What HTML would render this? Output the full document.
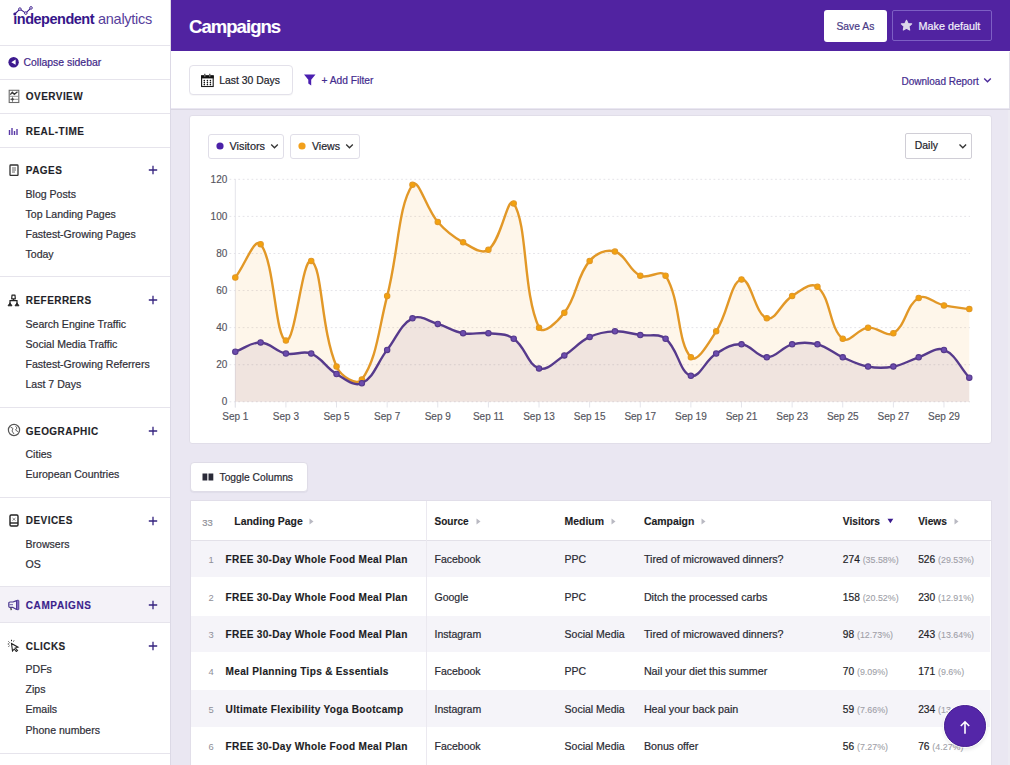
<!DOCTYPE html>
<html><head><meta charset="utf-8"><title>Campaigns</title>
<style>
html,body{margin:0;padding:0;width:1010px;height:765px;overflow:hidden;background:#e9e7f1;font-family:"Liberation Sans", sans-serif;}
.r{position:absolute;}
.t{position:absolute;white-space:nowrap;font-family:"Liberation Sans", sans-serif;}
</style></head><body>
<div class="r" style="left:0px;top:0px;width:1010px;height:765px;background:#eae7f2"></div>
<div class="r" style="left:0px;top:0px;width:170px;height:765px;background:#ffffff"></div>
<div class="r" style="left:170px;top:0px;width:1px;height:765px;background:#dcd9e6"></div>
<div class="r" style="left:171px;top:0px;width:839px;height:51.5px;background:#5123a1"></div>
<div class="r" style="left:171px;top:51px;width:839px;height:57px;background:#ffffff"></div>
<div class="r" style="left:171px;top:108.5px;width:839px;height:1.5px;background:#d9d6e2"></div>
<div class="r" style="left:1009px;top:51.5px;width:1px;height:57px;background:#e2e0e8"></div>
<div class="r" style="left:1008px;top:110px;width:2px;height:655px;background:#edebf3"></div>
<div class="t" style="left:13.3px;top:10.7px;font-size:14.5px;line-height:16px;color:#36168a;font-weight:700;letter-spacing:-0.5px">&#305;ndependent</div>
<div class="t" style="left:98px;top:10.7px;font-size:14.5px;line-height:16px;color:#57409c;letter-spacing:-0.27px">analytics</div>
<svg class="r" style="left:12px;top:6px;" width="22" height="10" viewBox="0 0 22 10"><polyline points="2.8,8 7.9,3.1 13.8,7.1 19,1.9" fill="none" stroke="#36168a" stroke-width="1.1"/><circle cx="2.8" cy="8" r="1.5" fill="#36168a"/><circle cx="7.9" cy="3.1" r="1.3" fill="#fff" stroke="#36168a" stroke-width="0.9"/><circle cx="13.8" cy="7.1" r="1.3" fill="#fff" stroke="#36168a" stroke-width="0.9"/><circle cx="19" cy="1.9" r="1.3" fill="#fff" stroke="#36168a" stroke-width="0.9"/></svg>
<div class="r" style="left:0px;top:45px;width:170px;height:1px;background:#e6e4ec"></div>
<div class="r" style="left:0px;top:79px;width:170px;height:1px;background:#e6e4ec"></div>
<div class="r" style="left:0px;top:113px;width:170px;height:1px;background:#e6e4ec"></div>
<div class="r" style="left:0px;top:147px;width:170px;height:1px;background:#e6e4ec"></div>
<div class="r" style="left:0px;top:276px;width:170px;height:1px;background:#e6e4ec"></div>
<div class="r" style="left:0px;top:407px;width:170px;height:1px;background:#e6e4ec"></div>
<div class="r" style="left:0px;top:497px;width:170px;height:1px;background:#e6e4ec"></div>
<div class="r" style="left:0px;top:586px;width:170px;height:1px;background:#e6e4ec"></div>
<div class="r" style="left:0px;top:622px;width:170px;height:1px;background:#e6e4ec"></div>
<div class="r" style="left:0px;top:753px;width:170px;height:1px;background:#e6e4ec"></div>
<div class="r" style="left:0px;top:587px;width:170px;height:35px;background:#f4f2f8"></div>
<svg class="r" style="left:8px;top:57px;" width="12" height="12" viewBox="0 0 12 12"><circle cx="5.6" cy="5.2" r="5.2" fill="#3d1a8f"/><path d="M7.6,2.6 L3.3,5.2 L7.6,7.8 Z" fill="#fff"/></svg>
<div class="t" style="left:23.50px;top:58.15px;font-size:10.45px;line-height:10.45px;color:#3f2788;-webkit-text-stroke:0.2px #3f2788;">Collapse sidebar</div>
<div class="t" style="left:25.80px;top:92.33px;font-size:10px;line-height:10px;font-weight:700;color:#1f1f29;-webkit-text-stroke:0.12px #1f1f29;letter-spacing:0.45px;">OVERVIEW</div>
<div class="t" style="left:25.80px;top:126.53px;font-size:10px;line-height:10px;font-weight:700;color:#1f1f29;-webkit-text-stroke:0.12px #1f1f29;letter-spacing:0.45px;">REAL-TIME</div>
<div class="t" style="left:25.80px;top:166.34px;font-size:10px;line-height:10px;font-weight:700;color:#1f1f29;-webkit-text-stroke:0.12px #1f1f29;letter-spacing:0.45px;">PAGES</div>
<div class="t" style="left:25.80px;top:296.44px;font-size:10px;line-height:10px;font-weight:700;color:#1f1f29;-webkit-text-stroke:0.12px #1f1f29;letter-spacing:0.45px;">REFERRERS</div>
<div class="t" style="left:25.80px;top:426.84px;font-size:10px;line-height:10px;font-weight:700;color:#1f1f29;-webkit-text-stroke:0.12px #1f1f29;letter-spacing:0.45px;">GEOGRAPHIC</div>
<div class="t" style="left:25.80px;top:516.33px;font-size:10px;line-height:10px;font-weight:700;color:#1f1f29;-webkit-text-stroke:0.12px #1f1f29;letter-spacing:0.45px;">DEVICES</div>
<div class="t" style="left:25.80px;top:601.33px;font-size:10px;line-height:10px;font-weight:700;color:#3b1f8c;-webkit-text-stroke:0.12px #3b1f8c;letter-spacing:0.6px;">CAMPAIGNS</div>
<div class="t" style="left:25.80px;top:641.53px;font-size:10px;line-height:10px;font-weight:700;color:#1f1f29;-webkit-text-stroke:0.12px #1f1f29;letter-spacing:0.45px;">CLICKS</div>
<div class="t" style="left:25.50px;top:189.27px;font-size:10.55px;line-height:10.55px;color:#2f2f38;-webkit-text-stroke:0.2px #2f2f38;">Blog Posts</div>
<div class="t" style="left:25.50px;top:209.27px;font-size:10.55px;line-height:10.55px;color:#2f2f38;-webkit-text-stroke:0.2px #2f2f38;">Top Landing Pages</div>
<div class="t" style="left:25.50px;top:229.27px;font-size:10.55px;line-height:10.55px;color:#2f2f38;-webkit-text-stroke:0.2px #2f2f38;">Fastest-Growing Pages</div>
<div class="t" style="left:25.50px;top:249.27px;font-size:10.55px;line-height:10.55px;color:#2f2f38;-webkit-text-stroke:0.2px #2f2f38;">Today</div>
<div class="t" style="left:25.50px;top:318.97px;font-size:10.55px;line-height:10.55px;color:#2f2f38;-webkit-text-stroke:0.2px #2f2f38;">Search Engine Traffic</div>
<div class="t" style="left:25.50px;top:338.97px;font-size:10.55px;line-height:10.55px;color:#2f2f38;-webkit-text-stroke:0.2px #2f2f38;">Social Media Traffic</div>
<div class="t" style="left:25.50px;top:359.17px;font-size:10.55px;line-height:10.55px;color:#2f2f38;-webkit-text-stroke:0.2px #2f2f38;">Fastest-Growing Referrers</div>
<div class="t" style="left:25.50px;top:379.27px;font-size:10.55px;line-height:10.55px;color:#2f2f38;-webkit-text-stroke:0.2px #2f2f38;">Last 7 Days</div>
<div class="t" style="left:25.50px;top:448.87px;font-size:10.55px;line-height:10.55px;color:#2f2f38;-webkit-text-stroke:0.2px #2f2f38;">Cities</div>
<div class="t" style="left:25.50px;top:468.87px;font-size:10.55px;line-height:10.55px;color:#2f2f38;-webkit-text-stroke:0.2px #2f2f38;">European Countries</div>
<div class="t" style="left:25.50px;top:538.87px;font-size:10.55px;line-height:10.55px;color:#2f2f38;-webkit-text-stroke:0.2px #2f2f38;">Browsers</div>
<div class="t" style="left:25.50px;top:558.87px;font-size:10.55px;line-height:10.55px;color:#2f2f38;-webkit-text-stroke:0.2px #2f2f38;">OS</div>
<div class="t" style="left:25.50px;top:663.87px;font-size:10.55px;line-height:10.55px;color:#2f2f38;-webkit-text-stroke:0.2px #2f2f38;">PDFs</div>
<div class="t" style="left:25.50px;top:683.97px;font-size:10.55px;line-height:10.55px;color:#2f2f38;-webkit-text-stroke:0.2px #2f2f38;">Zips</div>
<div class="t" style="left:25.50px;top:704.27px;font-size:10.55px;line-height:10.55px;color:#2f2f38;-webkit-text-stroke:0.2px #2f2f38;">Emails</div>
<div class="t" style="left:25.50px;top:724.57px;font-size:10.55px;line-height:10.55px;color:#2f2f38;-webkit-text-stroke:0.2px #2f2f38;">Phone numbers</div>
<svg class="r" style="left:148px;top:165.4px;" width="10" height="10" viewBox="0 0 10 10"><path d="M5,0.8 V9.2 M0.8,5 H9.2" stroke="#35237f" stroke-width="1.3"/></svg>
<svg class="r" style="left:148px;top:295.4px;" width="10" height="10" viewBox="0 0 10 10"><path d="M5,0.8 V9.2 M0.8,5 H9.2" stroke="#35237f" stroke-width="1.3"/></svg>
<svg class="r" style="left:148px;top:425.7px;" width="10" height="10" viewBox="0 0 10 10"><path d="M5,0.8 V9.2 M0.8,5 H9.2" stroke="#35237f" stroke-width="1.3"/></svg>
<svg class="r" style="left:148px;top:515.6999999999999px;" width="10" height="10" viewBox="0 0 10 10"><path d="M5,0.8 V9.2 M0.8,5 H9.2" stroke="#35237f" stroke-width="1.3"/></svg>
<svg class="r" style="left:148px;top:600.4px;" width="10" height="10" viewBox="0 0 10 10"><path d="M5,0.8 V9.2 M0.8,5 H9.2" stroke="#35237f" stroke-width="1.3"/></svg>
<svg class="r" style="left:148px;top:640.6999999999999px;" width="10" height="10" viewBox="0 0 10 10"><path d="M5,0.8 V9.2 M0.8,5 H9.2" stroke="#35237f" stroke-width="1.3"/></svg>
<svg class="r" style="left:8px;top:89px;" width="12" height="15" viewBox="0 0 12 15"><rect x="1.2" y="1.3" width="9.6" height="12.2" fill="none" stroke="#6a6a6a" stroke-width="1.1"/><polyline points="2.3,5.6 4.3,3.3 6.3,5.3 9.5,2.8" fill="none" stroke="#333" stroke-width="1.3"/><path d="M1.5,7.3 H10.5 M1.5,10.3 H10.5 M4.5,7.5 V13" stroke="#888" stroke-width="0.9"/><circle cx="4.5" cy="10.3" r="1.2" fill="#444"/></svg>
<svg class="r" style="left:8px;top:127px;" width="12" height="9" viewBox="0 0 12 9"><path d="M1.5,3 V8 M4,1 V8 M6.5,4 V8 M9,2 V8" stroke="#5a3aa6" stroke-width="1.4"/></svg>
<svg class="r" style="left:9px;top:164px;" width="10" height="12" viewBox="0 0 10 12"><rect x="1" y="1" width="8" height="10.5" rx="0.8" fill="none" stroke="#333" stroke-width="1.3"/><path d="M3,4 H7 M3,6 H7 M3,8 H6" stroke="#555" stroke-width="0.9"/></svg>
<svg class="r" style="left:7px;top:294px;" width="13" height="13" viewBox="0 0 13 13"><path d="M5,1.2 H8 L8.3,4.8 H4.7 Z" fill="none" stroke="#222" stroke-width="1.2" stroke-linejoin="round"/><path d="M6.5,5 V6.5 M3,9 V6.7 H10 V9" fill="none" stroke="#222" stroke-width="1.2"/><path d="M1,11.8 L3,8.8 L5,11.8 Z M8,11.8 L10,8.8 L12,11.8 Z" fill="#222" stroke="#222" stroke-width="0.9" stroke-linejoin="round"/></svg>
<svg class="r" style="left:7px;top:423px;" width="14" height="14" viewBox="0 0 14 14"><circle cx="7" cy="7" r="5.6" fill="none" stroke="#555" stroke-width="1.2"/><path d="M3.5,4 L6,5.5 L5,8 L7,11 M8.5,3.2 L10,5 L8.5,7 L11.5,9" fill="none" stroke="#666" stroke-width="1"/></svg>
<svg class="r" style="left:9px;top:514px;" width="10" height="13" viewBox="0 0 10 13"><rect x="1" y="1" width="8" height="11" rx="1.2" fill="none" stroke="#222" stroke-width="1.4"/><path d="M1,9 H9" stroke="#222" stroke-width="1.4"/><path d="M3.5,4 L6.5,6.5 M6.5,4 L3.5,6.5" stroke="#666" stroke-width="0.8"/></svg>
<svg class="r" style="left:7px;top:599px;" width="13" height="13" viewBox="0 0 13 13"><path d="M1.8,4.2 Q1.8,3 3,3 H6 L9.6,1.6 V10.4 L6,8.4 H3 Q1.8,8.4 1.8,7.2 Z" fill="none" stroke="#4a3690" stroke-width="1.2" stroke-linejoin="round"/><rect x="9.6" y="1.3" width="2.2" height="9.4" rx="0.5" fill="#8a72c8" stroke="#4a3690" stroke-width="0.9"/><path d="M3.8,8.6 L4.3,11.2" stroke="#555" stroke-width="1.5"/><path d="M2.5,5.7 H6" stroke="#4a3690" stroke-width="0.8"/></svg>
<svg class="r" style="left:7px;top:639px;" width="13" height="13" viewBox="0 0 13 13"><path d="M4.5,4.5 L11,8.2 L8.3,9 L10.5,11.5 L9.3,12.5 L7.2,10 L5.5,12 Z" fill="#fff" stroke="#222" stroke-width="1.1"/><path d="M1.5,2.5 L2.5,3.5 M4.5,0.8 V2.2 M7,1.5 L6.5,2.5 M0.8,5 H2.2 M1.5,7.5 L2.5,6.8" stroke="#222" stroke-width="1"/></svg>
<div class="t" style="left:189.00px;top:17.54px;font-size:18.5px;line-height:18.5px;font-weight:700;color:#ffffff;-webkit-text-stroke:0.12px #ffffff;letter-spacing:-0.95px;">Campaigns</div>
<div class="r" style="left:824px;top:10px;width:63px;height:31.5px;background:#fff;border-radius:3px"></div>
<div class="t" style="left:836.50px;top:22.08px;font-size:10.3px;line-height:10.3px;color:#4a3a86;-webkit-text-stroke:0.2px #4a3a86;">Save As</div>
<div class="r" style="left:892px;top:10px;width:100px;height:31px;border:1px solid #7d5fc4;border-radius:2px;box-sizing:border-box"></div>
<svg class="r" style="left:900px;top:19.3px;" width="13" height="12" viewBox="0 0 13 12"><path d="M6.5,1.2 L8.1,4.5 L11.7,4.9 L9,7.4 L9.7,11 L6.5,9.2 L3.3,11 L4,7.4 L1.3,4.9 L4.9,4.5 Z" fill="#dcd6ea" stroke="#dcd6ea" stroke-width="1.1" stroke-linejoin="round"/></svg>
<div class="t" style="left:918.50px;top:20.76px;font-size:10.8px;line-height:10.8px;color:#f3effa;-webkit-text-stroke:0.2px #f3effa;">Make default</div>
<div class="r" style="left:189px;top:65px;width:104px;height:30px;background:#fff;border:1px solid #e3e1ea;border-radius:4px;box-sizing:border-box;box-shadow:0 1px 1px rgba(0,0,0,0.03)"></div>
<svg class="r" style="left:200px;top:73px;" width="15" height="15" viewBox="0 0 15 15"><rect x="1.6" y="2.9" width="11.6" height="10.6" fill="none" stroke="#1a1a1a" stroke-width="1.1"/><rect x="1.1" y="2.4" width="12.6" height="3" fill="#111"/><rect x="4" y="0.8" width="1.5" height="3" fill="#666"/><rect x="9" y="0.8" width="1.5" height="3" fill="#666"/><circle cx="4.3" cy="7.6" r="0.8" fill="#111"/><circle cx="4.3" cy="9.6" r="0.8" fill="#111"/><circle cx="4.3" cy="11.6" r="0.8" fill="#111"/><circle cx="7.4" cy="7.6" r="0.8" fill="#111"/><circle cx="7.4" cy="9.6" r="0.8" fill="#111"/><circle cx="7.4" cy="11.6" r="0.8" fill="#111"/><circle cx="10.4" cy="7.6" r="0.8" fill="#111"/><circle cx="10.4" cy="9.6" r="0.8" fill="#111"/><circle cx="10.4" cy="11.6" r="0.8" fill="#111"/></svg>
<div class="t" style="left:219.20px;top:76.30px;font-size:10.4px;line-height:10.4px;color:#22222a;-webkit-text-stroke:0.2px #22222a;">Last 30 Days</div>
<svg class="r" style="left:303px;top:73px;" width="14" height="14" viewBox="0 0 14 14"><path d="M1,1.5 H12.5 L8.2,6.8 V12.5 L5.3,10.6 V6.8 Z" fill="#4a1fb0"/></svg>
<div class="t" style="left:321.50px;top:76.47px;font-size:10.2px;line-height:10.2px;color:#432b8e;-webkit-text-stroke:0.2px #432b8e;">+ Add Filter</div>
<div class="t" style="left:901.50px;top:76.63px;font-size:10px;line-height:10px;color:#432b8e;-webkit-text-stroke:0.2px #432b8e;">Download Report</div>
<svg class="r" style="left:983px;top:77px;" width="9" height="7" viewBox="0 0 9 7"><path d="M1.2,1.5 L4.5,4.8 L7.8,1.5" fill="none" stroke="#4b2a9a" stroke-width="1.4"/></svg>
<div class="r" style="left:189px;top:114.5px;width:802.5px;height:329px;background:#fff;border:1px solid #e1dee9;border-radius:3px;box-sizing:border-box"></div>
<div class="r" style="left:208px;top:133.5px;width:76px;height:25px;background:#fff;border:1px solid #e0dee8;border-radius:3px;box-sizing:border-box"></div>
<svg class="r" style="left:216px;top:142px;" width="8" height="8" viewBox="0 0 8 8"><circle cx="4" cy="4" r="3.6" fill="#4b21a8"/></svg>
<div class="t" style="left:229.50px;top:141.17px;font-size:10.9px;line-height:10.9px;color:#25252e;-webkit-text-stroke:0.2px #25252e;">Visitors</div>
<svg class="r" style="left:270px;top:143px;" width="9" height="7" viewBox="0 0 9 7"><path d="M1.2,1.5 L4.5,4.8 L7.8,1.5" fill="none" stroke="#333" stroke-width="1.3"/></svg>
<div class="r" style="left:290px;top:133.5px;width:69.5px;height:25px;background:#fff;border:1px solid #e0dee8;border-radius:3px;box-sizing:border-box"></div>
<svg class="r" style="left:298px;top:142px;" width="8" height="8" viewBox="0 0 8 8"><circle cx="4" cy="4" r="3.6" fill="#f2a01c"/></svg>
<div class="t" style="left:312.00px;top:141.43px;font-size:10.6px;line-height:10.6px;color:#25252e;-webkit-text-stroke:0.2px #25252e;">Views</div>
<svg class="r" style="left:344.5px;top:143px;" width="9" height="7" viewBox="0 0 9 7"><path d="M1.2,1.5 L4.5,4.8 L7.8,1.5" fill="none" stroke="#333" stroke-width="1.3"/></svg>
<div class="r" style="left:905px;top:133px;width:67px;height:25.5px;background:#fff;border:1px solid #d0ced6;border-radius:2px;box-sizing:border-box"></div>
<div class="t" style="left:914.80px;top:141.20px;font-size:10.4px;line-height:10.4px;color:#22222a;-webkit-text-stroke:0.2px #22222a;">Daily</div>
<svg class="r" style="left:957.5px;top:143px;" width="10" height="7" viewBox="0 0 10 7"><path d="M1.5,1.5 L4.8,4.8 L8.1,1.5" fill="none" stroke="#333" stroke-width="1.3"/></svg>
<svg class="r" style="left:0;top:0" width="1010" height="765" viewBox="0 0 1010 765"><line x1="229.5" y1="401.80" x2="970" y2="401.80" stroke="#e4e3e8" stroke-width="1" stroke-dasharray="1.8,2.6"/>
<line x1="229.5" y1="364.72" x2="970" y2="364.72" stroke="#e4e3e8" stroke-width="1" stroke-dasharray="1.8,2.6"/>
<line x1="229.5" y1="327.63" x2="970" y2="327.63" stroke="#e4e3e8" stroke-width="1" stroke-dasharray="1.8,2.6"/>
<line x1="229.5" y1="290.55" x2="970" y2="290.55" stroke="#e4e3e8" stroke-width="1" stroke-dasharray="1.8,2.6"/>
<line x1="229.5" y1="253.47" x2="970" y2="253.47" stroke="#e4e3e8" stroke-width="1" stroke-dasharray="1.8,2.6"/>
<line x1="229.5" y1="216.38" x2="970" y2="216.38" stroke="#e4e3e8" stroke-width="1" stroke-dasharray="1.8,2.6"/>
<line x1="229.5" y1="179.30" x2="970" y2="179.30" stroke="#e4e3e8" stroke-width="1" stroke-dasharray="1.8,2.6"/>
<line x1="235.30" y1="179" x2="235.30" y2="407.5" stroke="#e4e4ea" stroke-width="1"/>
<line x1="235.30" y1="401.8" x2="235.30" y2="407.5" stroke="#e4e4ea" stroke-width="1"/>
<line x1="285.92" y1="401.8" x2="285.92" y2="407.5" stroke="#e4e4ea" stroke-width="1"/>
<line x1="336.54" y1="401.8" x2="336.54" y2="407.5" stroke="#e4e4ea" stroke-width="1"/>
<line x1="387.16" y1="401.8" x2="387.16" y2="407.5" stroke="#e4e4ea" stroke-width="1"/>
<line x1="437.78" y1="401.8" x2="437.78" y2="407.5" stroke="#e4e4ea" stroke-width="1"/>
<line x1="488.40" y1="401.8" x2="488.40" y2="407.5" stroke="#e4e4ea" stroke-width="1"/>
<line x1="539.02" y1="401.8" x2="539.02" y2="407.5" stroke="#e4e4ea" stroke-width="1"/>
<line x1="589.64" y1="401.8" x2="589.64" y2="407.5" stroke="#e4e4ea" stroke-width="1"/>
<line x1="640.26" y1="401.8" x2="640.26" y2="407.5" stroke="#e4e4ea" stroke-width="1"/>
<line x1="690.88" y1="401.8" x2="690.88" y2="407.5" stroke="#e4e4ea" stroke-width="1"/>
<line x1="741.50" y1="401.8" x2="741.50" y2="407.5" stroke="#e4e4ea" stroke-width="1"/>
<line x1="792.12" y1="401.8" x2="792.12" y2="407.5" stroke="#e4e4ea" stroke-width="1"/>
<line x1="842.74" y1="401.8" x2="842.74" y2="407.5" stroke="#e4e4ea" stroke-width="1"/>
<line x1="893.36" y1="401.8" x2="893.36" y2="407.5" stroke="#e4e4ea" stroke-width="1"/>
<line x1="943.98" y1="401.8" x2="943.98" y2="407.5" stroke="#e4e4ea" stroke-width="1"/>
<path d="M235.30,277.57 C245.42,264.22 254.62,236.73 260.61,244.20 C274.87,261.95 274.91,336.98 285.92,340.61 C295.16,343.66 302.42,256.37 311.23,260.88 C322.67,266.75 320.49,328.95 336.54,366.57 C340.74,376.42 356.87,386.48 361.85,379.55 C377.12,358.30 378.39,329.85 387.16,296.11 C398.64,251.97 397.94,206.15 412.47,184.86 C418.19,176.48 426.04,208.61 437.78,221.95 C446.28,231.60 451.91,236.20 463.09,242.34 C472.16,247.32 481.66,254.95 488.40,249.76 C501.90,239.37 507.76,194.24 513.71,203.40 C528.00,225.39 522.58,292.10 539.02,327.63 C542.82,335.86 557.51,321.79 564.33,312.80 C577.76,295.09 575.83,277.57 589.64,260.88 C596.08,253.10 606.13,249.03 614.95,251.61 C626.38,254.96 628.52,270.12 640.26,275.72 C648.76,279.77 660.94,268.26 665.57,275.72 C681.19,300.89 676.67,341.68 690.88,357.30 C696.91,363.93 708.38,343.35 716.19,331.34 C728.63,312.20 730.28,282.30 741.50,279.43 C750.52,277.11 755.08,314.49 766.81,318.36 C775.32,321.17 780.87,303.12 792.12,296.11 C801.12,290.51 810.99,281.41 817.43,286.84 C831.24,298.47 829.05,327.72 842.74,338.76 C849.29,344.04 857.60,328.78 868.05,327.63 C877.85,326.56 885.79,337.63 893.36,333.20 C906.04,325.77 906.08,304.89 918.67,297.97 C926.33,293.76 933.70,303.12 943.98,305.38 C953.95,307.57 959.17,307.61 969.29,309.09 L969.29,401.8 L235.3,401.8 Z" fill="rgba(243,156,18,0.09)"/>
<path d="M235.30,351.74 C245.42,348.03 250.61,342.10 260.61,342.47 C270.86,342.84 275.35,351.27 285.92,353.59 C295.60,355.72 302.37,350.02 311.23,353.59 C322.61,358.18 325.47,367.50 336.54,373.99 C345.72,379.37 353.92,387.03 361.85,383.26 C374.17,377.39 376.86,363.09 387.16,349.88 C397.10,337.13 400.13,324.69 412.47,318.36 C420.38,314.31 427.86,321.02 437.78,323.93 C448.10,326.95 452.65,331.28 463.09,333.20 C472.90,334.99 478.40,332.10 488.40,333.20 C498.64,334.32 505.63,333.13 513.71,338.76 C525.87,347.22 527.31,364.57 539.02,368.43 C547.56,371.24 554.70,361.44 564.33,355.45 C574.95,348.83 578.55,342.18 589.64,336.90 C598.80,332.54 604.76,331.71 614.95,331.34 C625.01,330.97 630.14,333.57 640.26,335.05 C650.38,336.53 658.22,332.84 665.57,338.76 C678.47,349.15 679.31,372.45 690.88,375.84 C699.56,378.39 704.94,360.60 716.19,353.59 C725.19,347.99 731.65,343.60 741.50,344.32 C751.90,345.08 756.69,357.30 766.81,357.30 C776.93,357.30 781.41,347.07 792.12,344.32 C801.65,341.88 807.90,341.88 817.43,344.32 C828.14,347.07 832.34,352.73 842.74,357.30 C852.59,361.63 857.61,364.66 868.05,366.57 C877.86,368.37 883.55,368.37 893.36,366.57 C903.80,364.66 908.44,360.67 918.67,357.30 C928.68,354.00 935.63,346.52 943.98,349.88 C955.88,354.68 959.17,366.57 969.29,377.70 L969.29,401.8 L235.3,401.8 Z" fill="rgba(100,60,120,0.09)"/>
<path d="M235.30,277.57 C245.42,264.22 254.62,236.73 260.61,244.20 C274.87,261.95 274.91,336.98 285.92,340.61 C295.16,343.66 302.42,256.37 311.23,260.88 C322.67,266.75 320.49,328.95 336.54,366.57 C340.74,376.42 356.87,386.48 361.85,379.55 C377.12,358.30 378.39,329.85 387.16,296.11 C398.64,251.97 397.94,206.15 412.47,184.86 C418.19,176.48 426.04,208.61 437.78,221.95 C446.28,231.60 451.91,236.20 463.09,242.34 C472.16,247.32 481.66,254.95 488.40,249.76 C501.90,239.37 507.76,194.24 513.71,203.40 C528.00,225.39 522.58,292.10 539.02,327.63 C542.82,335.86 557.51,321.79 564.33,312.80 C577.76,295.09 575.83,277.57 589.64,260.88 C596.08,253.10 606.13,249.03 614.95,251.61 C626.38,254.96 628.52,270.12 640.26,275.72 C648.76,279.77 660.94,268.26 665.57,275.72 C681.19,300.89 676.67,341.68 690.88,357.30 C696.91,363.93 708.38,343.35 716.19,331.34 C728.63,312.20 730.28,282.30 741.50,279.43 C750.52,277.11 755.08,314.49 766.81,318.36 C775.32,321.17 780.87,303.12 792.12,296.11 C801.12,290.51 810.99,281.41 817.43,286.84 C831.24,298.47 829.05,327.72 842.74,338.76 C849.29,344.04 857.60,328.78 868.05,327.63 C877.85,326.56 885.79,337.63 893.36,333.20 C906.04,325.77 906.08,304.89 918.67,297.97 C926.33,293.76 933.70,303.12 943.98,305.38 C953.95,307.57 959.17,307.61 969.29,309.09" fill="none" stroke="#e29827" stroke-width="2.4"/>
<circle cx="235.30" cy="277.57" r="2.7" fill="#f4a20c" stroke="#e29827" stroke-width="1.1"/>
<circle cx="260.61" cy="244.20" r="2.7" fill="#f4a20c" stroke="#e29827" stroke-width="1.1"/>
<circle cx="285.92" cy="340.61" r="2.7" fill="#f4a20c" stroke="#e29827" stroke-width="1.1"/>
<circle cx="311.23" cy="260.88" r="2.7" fill="#f4a20c" stroke="#e29827" stroke-width="1.1"/>
<circle cx="336.54" cy="366.57" r="2.7" fill="#f4a20c" stroke="#e29827" stroke-width="1.1"/>
<circle cx="361.85" cy="379.55" r="2.7" fill="#f4a20c" stroke="#e29827" stroke-width="1.1"/>
<circle cx="387.16" cy="296.11" r="2.7" fill="#f4a20c" stroke="#e29827" stroke-width="1.1"/>
<circle cx="412.47" cy="184.86" r="2.7" fill="#f4a20c" stroke="#e29827" stroke-width="1.1"/>
<circle cx="437.78" cy="221.95" r="2.7" fill="#f4a20c" stroke="#e29827" stroke-width="1.1"/>
<circle cx="463.09" cy="242.34" r="2.7" fill="#f4a20c" stroke="#e29827" stroke-width="1.1"/>
<circle cx="488.40" cy="249.76" r="2.7" fill="#f4a20c" stroke="#e29827" stroke-width="1.1"/>
<circle cx="513.71" cy="203.40" r="2.7" fill="#f4a20c" stroke="#e29827" stroke-width="1.1"/>
<circle cx="539.02" cy="327.63" r="2.7" fill="#f4a20c" stroke="#e29827" stroke-width="1.1"/>
<circle cx="564.33" cy="312.80" r="2.7" fill="#f4a20c" stroke="#e29827" stroke-width="1.1"/>
<circle cx="589.64" cy="260.88" r="2.7" fill="#f4a20c" stroke="#e29827" stroke-width="1.1"/>
<circle cx="614.95" cy="251.61" r="2.7" fill="#f4a20c" stroke="#e29827" stroke-width="1.1"/>
<circle cx="640.26" cy="275.72" r="2.7" fill="#f4a20c" stroke="#e29827" stroke-width="1.1"/>
<circle cx="665.57" cy="275.72" r="2.7" fill="#f4a20c" stroke="#e29827" stroke-width="1.1"/>
<circle cx="690.88" cy="357.30" r="2.7" fill="#f4a20c" stroke="#e29827" stroke-width="1.1"/>
<circle cx="716.19" cy="331.34" r="2.7" fill="#f4a20c" stroke="#e29827" stroke-width="1.1"/>
<circle cx="741.50" cy="279.43" r="2.7" fill="#f4a20c" stroke="#e29827" stroke-width="1.1"/>
<circle cx="766.81" cy="318.36" r="2.7" fill="#f4a20c" stroke="#e29827" stroke-width="1.1"/>
<circle cx="792.12" cy="296.11" r="2.7" fill="#f4a20c" stroke="#e29827" stroke-width="1.1"/>
<circle cx="817.43" cy="286.84" r="2.7" fill="#f4a20c" stroke="#e29827" stroke-width="1.1"/>
<circle cx="842.74" cy="338.76" r="2.7" fill="#f4a20c" stroke="#e29827" stroke-width="1.1"/>
<circle cx="868.05" cy="327.63" r="2.7" fill="#f4a20c" stroke="#e29827" stroke-width="1.1"/>
<circle cx="893.36" cy="333.20" r="2.7" fill="#f4a20c" stroke="#e29827" stroke-width="1.1"/>
<circle cx="918.67" cy="297.97" r="2.7" fill="#f4a20c" stroke="#e29827" stroke-width="1.1"/>
<circle cx="943.98" cy="305.38" r="2.7" fill="#f4a20c" stroke="#e29827" stroke-width="1.1"/>
<circle cx="969.29" cy="309.09" r="2.7" fill="#f4a20c" stroke="#e29827" stroke-width="1.1"/>
<path d="M235.30,351.74 C245.42,348.03 250.61,342.10 260.61,342.47 C270.86,342.84 275.35,351.27 285.92,353.59 C295.60,355.72 302.37,350.02 311.23,353.59 C322.61,358.18 325.47,367.50 336.54,373.99 C345.72,379.37 353.92,387.03 361.85,383.26 C374.17,377.39 376.86,363.09 387.16,349.88 C397.10,337.13 400.13,324.69 412.47,318.36 C420.38,314.31 427.86,321.02 437.78,323.93 C448.10,326.95 452.65,331.28 463.09,333.20 C472.90,334.99 478.40,332.10 488.40,333.20 C498.64,334.32 505.63,333.13 513.71,338.76 C525.87,347.22 527.31,364.57 539.02,368.43 C547.56,371.24 554.70,361.44 564.33,355.45 C574.95,348.83 578.55,342.18 589.64,336.90 C598.80,332.54 604.76,331.71 614.95,331.34 C625.01,330.97 630.14,333.57 640.26,335.05 C650.38,336.53 658.22,332.84 665.57,338.76 C678.47,349.15 679.31,372.45 690.88,375.84 C699.56,378.39 704.94,360.60 716.19,353.59 C725.19,347.99 731.65,343.60 741.50,344.32 C751.90,345.08 756.69,357.30 766.81,357.30 C776.93,357.30 781.41,347.07 792.12,344.32 C801.65,341.88 807.90,341.88 817.43,344.32 C828.14,347.07 832.34,352.73 842.74,357.30 C852.59,361.63 857.61,364.66 868.05,366.57 C877.86,368.37 883.55,368.37 893.36,366.57 C903.80,364.66 908.44,360.67 918.67,357.30 C928.68,354.00 935.63,346.52 943.98,349.88 C955.88,354.68 959.17,366.57 969.29,377.70" fill="none" stroke="#563a8c" stroke-width="2.4"/>
<circle cx="235.30" cy="351.74" r="2.7" fill="#6c4cae" stroke="#563a8c" stroke-width="1.1"/>
<circle cx="260.61" cy="342.47" r="2.7" fill="#6c4cae" stroke="#563a8c" stroke-width="1.1"/>
<circle cx="285.92" cy="353.59" r="2.7" fill="#6c4cae" stroke="#563a8c" stroke-width="1.1"/>
<circle cx="311.23" cy="353.59" r="2.7" fill="#6c4cae" stroke="#563a8c" stroke-width="1.1"/>
<circle cx="336.54" cy="373.99" r="2.7" fill="#6c4cae" stroke="#563a8c" stroke-width="1.1"/>
<circle cx="361.85" cy="383.26" r="2.7" fill="#6c4cae" stroke="#563a8c" stroke-width="1.1"/>
<circle cx="387.16" cy="349.88" r="2.7" fill="#6c4cae" stroke="#563a8c" stroke-width="1.1"/>
<circle cx="412.47" cy="318.36" r="2.7" fill="#6c4cae" stroke="#563a8c" stroke-width="1.1"/>
<circle cx="437.78" cy="323.93" r="2.7" fill="#6c4cae" stroke="#563a8c" stroke-width="1.1"/>
<circle cx="463.09" cy="333.20" r="2.7" fill="#6c4cae" stroke="#563a8c" stroke-width="1.1"/>
<circle cx="488.40" cy="333.20" r="2.7" fill="#6c4cae" stroke="#563a8c" stroke-width="1.1"/>
<circle cx="513.71" cy="338.76" r="2.7" fill="#6c4cae" stroke="#563a8c" stroke-width="1.1"/>
<circle cx="539.02" cy="368.43" r="2.7" fill="#6c4cae" stroke="#563a8c" stroke-width="1.1"/>
<circle cx="564.33" cy="355.45" r="2.7" fill="#6c4cae" stroke="#563a8c" stroke-width="1.1"/>
<circle cx="589.64" cy="336.90" r="2.7" fill="#6c4cae" stroke="#563a8c" stroke-width="1.1"/>
<circle cx="614.95" cy="331.34" r="2.7" fill="#6c4cae" stroke="#563a8c" stroke-width="1.1"/>
<circle cx="640.26" cy="335.05" r="2.7" fill="#6c4cae" stroke="#563a8c" stroke-width="1.1"/>
<circle cx="665.57" cy="338.76" r="2.7" fill="#6c4cae" stroke="#563a8c" stroke-width="1.1"/>
<circle cx="690.88" cy="375.84" r="2.7" fill="#6c4cae" stroke="#563a8c" stroke-width="1.1"/>
<circle cx="716.19" cy="353.59" r="2.7" fill="#6c4cae" stroke="#563a8c" stroke-width="1.1"/>
<circle cx="741.50" cy="344.32" r="2.7" fill="#6c4cae" stroke="#563a8c" stroke-width="1.1"/>
<circle cx="766.81" cy="357.30" r="2.7" fill="#6c4cae" stroke="#563a8c" stroke-width="1.1"/>
<circle cx="792.12" cy="344.32" r="2.7" fill="#6c4cae" stroke="#563a8c" stroke-width="1.1"/>
<circle cx="817.43" cy="344.32" r="2.7" fill="#6c4cae" stroke="#563a8c" stroke-width="1.1"/>
<circle cx="842.74" cy="357.30" r="2.7" fill="#6c4cae" stroke="#563a8c" stroke-width="1.1"/>
<circle cx="868.05" cy="366.57" r="2.7" fill="#6c4cae" stroke="#563a8c" stroke-width="1.1"/>
<circle cx="893.36" cy="366.57" r="2.7" fill="#6c4cae" stroke="#563a8c" stroke-width="1.1"/>
<circle cx="918.67" cy="357.30" r="2.7" fill="#6c4cae" stroke="#563a8c" stroke-width="1.1"/>
<circle cx="943.98" cy="349.88" r="2.7" fill="#6c4cae" stroke="#563a8c" stroke-width="1.1"/>
<circle cx="969.29" cy="377.70" r="2.7" fill="#6c4cae" stroke="#563a8c" stroke-width="1.1"/></svg>
<div class="t" style="left:180px;width:47.3px;text-align:right;top:397.20px;font-size:10px;line-height:10px;color:#55555e;-webkit-text-stroke:0.15px #55555e">0</div>
<div class="t" style="left:180px;width:47.3px;text-align:right;top:360.12px;font-size:10px;line-height:10px;color:#55555e;-webkit-text-stroke:0.15px #55555e">20</div>
<div class="t" style="left:180px;width:47.3px;text-align:right;top:323.03px;font-size:10px;line-height:10px;color:#55555e;-webkit-text-stroke:0.15px #55555e">40</div>
<div class="t" style="left:180px;width:47.3px;text-align:right;top:285.95px;font-size:10px;line-height:10px;color:#55555e;-webkit-text-stroke:0.15px #55555e">60</div>
<div class="t" style="left:180px;width:47.3px;text-align:right;top:248.87px;font-size:10px;line-height:10px;color:#55555e;-webkit-text-stroke:0.15px #55555e">80</div>
<div class="t" style="left:180px;width:47.3px;text-align:right;top:211.78px;font-size:10px;line-height:10px;color:#55555e;-webkit-text-stroke:0.15px #55555e">100</div>
<div class="t" style="left:180px;width:47.3px;text-align:right;top:174.70px;font-size:10px;line-height:10px;color:#55555e;-webkit-text-stroke:0.15px #55555e">120</div>
<div class="t" style="left:205.30px;width:60px;text-align:center;top:411.84px;font-size:10px;line-height:10px;color:#55555e;-webkit-text-stroke:0.15px #55555e">Sep 1</div>
<div class="t" style="left:255.92px;width:60px;text-align:center;top:411.84px;font-size:10px;line-height:10px;color:#55555e;-webkit-text-stroke:0.15px #55555e">Sep 3</div>
<div class="t" style="left:306.54px;width:60px;text-align:center;top:411.84px;font-size:10px;line-height:10px;color:#55555e;-webkit-text-stroke:0.15px #55555e">Sep 5</div>
<div class="t" style="left:357.16px;width:60px;text-align:center;top:411.84px;font-size:10px;line-height:10px;color:#55555e;-webkit-text-stroke:0.15px #55555e">Sep 7</div>
<div class="t" style="left:407.78px;width:60px;text-align:center;top:411.84px;font-size:10px;line-height:10px;color:#55555e;-webkit-text-stroke:0.15px #55555e">Sep 9</div>
<div class="t" style="left:458.40px;width:60px;text-align:center;top:411.84px;font-size:10px;line-height:10px;color:#55555e;-webkit-text-stroke:0.15px #55555e">Sep 11</div>
<div class="t" style="left:509.02px;width:60px;text-align:center;top:411.84px;font-size:10px;line-height:10px;color:#55555e;-webkit-text-stroke:0.15px #55555e">Sep 13</div>
<div class="t" style="left:559.64px;width:60px;text-align:center;top:411.84px;font-size:10px;line-height:10px;color:#55555e;-webkit-text-stroke:0.15px #55555e">Sep 15</div>
<div class="t" style="left:610.26px;width:60px;text-align:center;top:411.84px;font-size:10px;line-height:10px;color:#55555e;-webkit-text-stroke:0.15px #55555e">Sep 17</div>
<div class="t" style="left:660.88px;width:60px;text-align:center;top:411.84px;font-size:10px;line-height:10px;color:#55555e;-webkit-text-stroke:0.15px #55555e">Sep 19</div>
<div class="t" style="left:711.50px;width:60px;text-align:center;top:411.84px;font-size:10px;line-height:10px;color:#55555e;-webkit-text-stroke:0.15px #55555e">Sep 21</div>
<div class="t" style="left:762.12px;width:60px;text-align:center;top:411.84px;font-size:10px;line-height:10px;color:#55555e;-webkit-text-stroke:0.15px #55555e">Sep 23</div>
<div class="t" style="left:812.74px;width:60px;text-align:center;top:411.84px;font-size:10px;line-height:10px;color:#55555e;-webkit-text-stroke:0.15px #55555e">Sep 25</div>
<div class="t" style="left:863.36px;width:60px;text-align:center;top:411.84px;font-size:10px;line-height:10px;color:#55555e;-webkit-text-stroke:0.15px #55555e">Sep 27</div>
<div class="t" style="left:913.98px;width:60px;text-align:center;top:411.84px;font-size:10px;line-height:10px;color:#55555e;-webkit-text-stroke:0.15px #55555e">Sep 29</div>
<div class="r" style="left:189.5px;top:462px;width:118px;height:29.5px;background:#fff;border:1px solid #dfdce7;border-radius:4px;box-sizing:border-box;box-shadow:0 1px 1px rgba(40,30,80,0.05)"></div>
<svg class="r" style="left:201.5px;top:473px;" width="12" height="8" viewBox="0 0 12 8"><rect x="0.5" y="0.5" width="4.8" height="7" fill="#2a2a38"/><rect x="6.5" y="0.5" width="4.8" height="7" fill="#2a2a38"/></svg>
<div class="t" style="left:219.50px;top:472.52px;font-size:10.25px;line-height:10.25px;color:#2a2a33;-webkit-text-stroke:0.2px #2a2a33;">Toggle Columns</div>
<div class="r" style="left:189.5px;top:500px;width:802px;height:270px;background:#fff;border:1px solid #e1dee9;box-sizing:border-box"></div>
<div class="r" style="left:189.5px;top:539.8px;width:801.7px;height:1px;background:#e3e1e9"></div>
<div class="r" style="left:425.5px;top:501.3px;width:1px;height:270px;background:#ebe9f0"></div>
<div class="r" style="left:190.5px;top:540.9px;width:235px;height:36.4px;background:#f5f4f9"></div>
<div class="r" style="left:426.5px;top:540.9px;width:563.7px;height:36.4px;background:#f5f4f9"></div>
<div class="r" style="left:190.5px;top:615.6px;width:235px;height:36.4px;background:#f5f4f9"></div>
<div class="r" style="left:426.5px;top:615.6px;width:563.7px;height:36.4px;background:#f5f4f9"></div>
<div class="r" style="left:190.5px;top:690.3px;width:235px;height:36.4px;background:#f5f4f9"></div>
<div class="r" style="left:426.5px;top:690.3px;width:563.7px;height:36.4px;background:#f5f4f9"></div>
<div class="t" style="left:202.30px;top:517.54px;font-size:9.4px;line-height:9.4px;color:#8f8f98;-webkit-text-stroke:0.2px #8f8f98;">33</div>
<div class="t" style="left:234.30px;top:516.65px;font-size:10.45px;line-height:10.45px;font-weight:700;color:#1c1c24;-webkit-text-stroke:0.12px #1c1c24;">Landing Page</div>
<svg class="r" style="left:309px;top:517.5px;" width="5" height="7" viewBox="0 0 5 7"><path d="M0.5,0.5 L4.5,3.5 L0.5,6.5 Z" fill="#b9b9c2"/></svg>
<div class="t" style="left:434.50px;top:516.99px;font-size:10.05px;line-height:10.05px;font-weight:700;color:#1c1c24;-webkit-text-stroke:0.12px #1c1c24;">Source</div>
<svg class="r" style="left:475.8px;top:517.5px;" width="5" height="7" viewBox="0 0 5 7"><path d="M0.5,0.5 L4.5,3.5 L0.5,6.5 Z" fill="#b9b9c2"/></svg>
<div class="t" style="left:564.60px;top:516.65px;font-size:10.45px;line-height:10.45px;font-weight:700;color:#1c1c24;-webkit-text-stroke:0.12px #1c1c24;">Medium</div>
<svg class="r" style="left:611px;top:517.5px;" width="5" height="7" viewBox="0 0 5 7"><path d="M0.5,0.5 L4.5,3.5 L0.5,6.5 Z" fill="#b9b9c2"/></svg>
<div class="t" style="left:643.90px;top:516.65px;font-size:10.45px;line-height:10.45px;font-weight:700;color:#1c1c24;-webkit-text-stroke:0.12px #1c1c24;">Campaign</div>
<svg class="r" style="left:701px;top:517.5px;" width="5" height="7" viewBox="0 0 5 7"><path d="M0.5,0.5 L4.5,3.5 L0.5,6.5 Z" fill="#b9b9c2"/></svg>
<div class="t" style="left:842.80px;top:516.87px;font-size:10.2px;line-height:10.2px;font-weight:700;color:#1c1c24;-webkit-text-stroke:0.12px #1c1c24;">Visitors</div>
<svg class="r" style="left:887px;top:518px;" width="7" height="6" viewBox="0 0 7 6"><path d="M0.5,0.8 L6.3,0.8 L3.4,5.2 Z" fill="#3a1a8e"/></svg>
<div class="t" style="left:918.20px;top:516.87px;font-size:10.2px;line-height:10.2px;font-weight:700;color:#1c1c24;-webkit-text-stroke:0.12px #1c1c24;">Views</div>
<svg class="r" style="left:954.2px;top:517.5px;" width="5" height="7" viewBox="0 0 5 7"><path d="M0.5,0.5 L4.5,3.5 L0.5,6.5 Z" fill="#b9b9c2"/></svg>
<div class="t" style="left:180px;width:33.8px;text-align:right;top:555.34px;font-size:9.4px;line-height:9.4px;color:#8f8f98">1</div>
<div class="t" style="left:225.60px;top:554.98px;font-size:10.1px;line-height:10.1px;font-weight:700;color:#1c1c24;-webkit-text-stroke:0.12px #1c1c24;letter-spacing:0.29px;">FREE 30-Day Whole Food Meal Plan</div>
<div class="t" style="left:434.50px;top:553.99px;font-size:10.5px;line-height:10.5px;color:#2a2a33;-webkit-text-stroke:0.2px #2a2a33;">Facebook</div>
<div class="t" style="left:564.60px;top:553.99px;font-size:10.5px;line-height:10.5px;color:#2a2a33;-webkit-text-stroke:0.2px #2a2a33;">PPC</div>
<div class="t" style="left:643.90px;top:554.00px;font-size:10.72px;line-height:10.72px;color:#2a2a33;-webkit-text-stroke:0.2px #2a2a33;letter-spacing:-0.02px;">Tired of microwaved dinners?</div>
<div class="t" style="left:842.80px;top:554.99px;font-size:10.2px;line-height:10.2px;color:#1f1f28;-webkit-text-stroke:0.2px #1f1f28;">274 <span style="font-size:8.9px;color:#a09fa8;-webkit-text-stroke:0.1px #a09fa8">(35.58%)</span></div>
<div class="t" style="left:918.20px;top:554.99px;font-size:10.2px;line-height:10.2px;color:#1f1f28;-webkit-text-stroke:0.2px #1f1f28;">526 <span style="font-size:8.9px;color:#a09fa8;-webkit-text-stroke:0.1px #a09fa8">(29.53%)</span></div>
<div class="t" style="left:180px;width:33.8px;text-align:right;top:592.69px;font-size:9.4px;line-height:9.4px;color:#8f8f98">2</div>
<div class="t" style="left:225.60px;top:592.98px;font-size:10.1px;line-height:10.1px;font-weight:700;color:#1c1c24;-webkit-text-stroke:0.12px #1c1c24;letter-spacing:0.29px;">FREE 30-Day Whole Food Meal Plan</div>
<div class="t" style="left:434.50px;top:591.99px;font-size:10.5px;line-height:10.5px;color:#2a2a33;-webkit-text-stroke:0.2px #2a2a33;">Google</div>
<div class="t" style="left:564.60px;top:591.99px;font-size:10.5px;line-height:10.5px;color:#2a2a33;-webkit-text-stroke:0.2px #2a2a33;">PPC</div>
<div class="t" style="left:643.90px;top:592.00px;font-size:10.72px;line-height:10.72px;color:#2a2a33;-webkit-text-stroke:0.2px #2a2a33;letter-spacing:-0.02px;">Ditch the processed carbs</div>
<div class="t" style="left:842.80px;top:592.99px;font-size:10.2px;line-height:10.2px;color:#1f1f28;-webkit-text-stroke:0.2px #1f1f28;">158 <span style="font-size:8.9px;color:#a09fa8;-webkit-text-stroke:0.1px #a09fa8">(20.52%)</span></div>
<div class="t" style="left:918.20px;top:592.99px;font-size:10.2px;line-height:10.2px;color:#1f1f28;-webkit-text-stroke:0.2px #1f1f28;">230 <span style="font-size:8.9px;color:#a09fa8;-webkit-text-stroke:0.1px #a09fa8">(12.91%)</span></div>
<div class="t" style="left:180px;width:33.8px;text-align:right;top:630.04px;font-size:9.4px;line-height:9.4px;color:#8f8f98">3</div>
<div class="t" style="left:225.60px;top:629.98px;font-size:10.1px;line-height:10.1px;font-weight:700;color:#1c1c24;-webkit-text-stroke:0.12px #1c1c24;letter-spacing:0.29px;">FREE 30-Day Whole Food Meal Plan</div>
<div class="t" style="left:434.50px;top:628.99px;font-size:10.5px;line-height:10.5px;color:#2a2a33;-webkit-text-stroke:0.2px #2a2a33;">Instagram</div>
<div class="t" style="left:564.60px;top:628.99px;font-size:10.5px;line-height:10.5px;color:#2a2a33;-webkit-text-stroke:0.2px #2a2a33;">Social Media</div>
<div class="t" style="left:643.90px;top:629.00px;font-size:10.72px;line-height:10.72px;color:#2a2a33;-webkit-text-stroke:0.2px #2a2a33;letter-spacing:-0.02px;">Tired of microwaved dinners?</div>
<div class="t" style="left:842.80px;top:629.99px;font-size:10.2px;line-height:10.2px;color:#1f1f28;-webkit-text-stroke:0.2px #1f1f28;">98 <span style="font-size:8.9px;color:#a09fa8;-webkit-text-stroke:0.1px #a09fa8">(12.73%)</span></div>
<div class="t" style="left:918.20px;top:629.99px;font-size:10.2px;line-height:10.2px;color:#1f1f28;-webkit-text-stroke:0.2px #1f1f28;">243 <span style="font-size:8.9px;color:#a09fa8;-webkit-text-stroke:0.1px #a09fa8">(13.64%)</span></div>
<div class="t" style="left:180px;width:33.8px;text-align:right;top:667.39px;font-size:9.4px;line-height:9.4px;color:#8f8f98">4</div>
<div class="t" style="left:225.60px;top:666.98px;font-size:10.1px;line-height:10.1px;font-weight:700;color:#1c1c24;-webkit-text-stroke:0.12px #1c1c24;letter-spacing:0.29px;">Meal Planning Tips &amp; Essentials</div>
<div class="t" style="left:434.50px;top:665.99px;font-size:10.5px;line-height:10.5px;color:#2a2a33;-webkit-text-stroke:0.2px #2a2a33;">Facebook</div>
<div class="t" style="left:564.60px;top:665.99px;font-size:10.5px;line-height:10.5px;color:#2a2a33;-webkit-text-stroke:0.2px #2a2a33;">PPC</div>
<div class="t" style="left:643.90px;top:666.00px;font-size:10.72px;line-height:10.72px;color:#2a2a33;-webkit-text-stroke:0.2px #2a2a33;letter-spacing:-0.02px;">Nail your diet this summer</div>
<div class="t" style="left:842.80px;top:666.99px;font-size:10.2px;line-height:10.2px;color:#1f1f28;-webkit-text-stroke:0.2px #1f1f28;">70 <span style="font-size:8.9px;color:#a09fa8;-webkit-text-stroke:0.1px #a09fa8">(9.09%)</span></div>
<div class="t" style="left:918.20px;top:666.99px;font-size:10.2px;line-height:10.2px;color:#1f1f28;-webkit-text-stroke:0.2px #1f1f28;">171 <span style="font-size:8.9px;color:#a09fa8;-webkit-text-stroke:0.1px #a09fa8">(9.6%)</span></div>
<div class="t" style="left:180px;width:33.8px;text-align:right;top:704.74px;font-size:9.4px;line-height:9.4px;color:#8f8f98">5</div>
<div class="t" style="left:225.60px;top:704.98px;font-size:10.1px;line-height:10.1px;font-weight:700;color:#1c1c24;-webkit-text-stroke:0.12px #1c1c24;letter-spacing:0.29px;">Ultimate Flexibility Yoga Bootcamp</div>
<div class="t" style="left:434.50px;top:703.99px;font-size:10.5px;line-height:10.5px;color:#2a2a33;-webkit-text-stroke:0.2px #2a2a33;">Instagram</div>
<div class="t" style="left:564.60px;top:703.99px;font-size:10.5px;line-height:10.5px;color:#2a2a33;-webkit-text-stroke:0.2px #2a2a33;">Social Media</div>
<div class="t" style="left:643.90px;top:704.00px;font-size:10.72px;line-height:10.72px;color:#2a2a33;-webkit-text-stroke:0.2px #2a2a33;letter-spacing:-0.02px;">Heal your back pain</div>
<div class="t" style="left:842.80px;top:704.99px;font-size:10.2px;line-height:10.2px;color:#1f1f28;-webkit-text-stroke:0.2px #1f1f28;">59 <span style="font-size:8.9px;color:#a09fa8;-webkit-text-stroke:0.1px #a09fa8">(7.66%)</span></div>
<div class="t" style="left:918.20px;top:704.99px;font-size:10.2px;line-height:10.2px;color:#1f1f28;-webkit-text-stroke:0.2px #1f1f28;">234 <span style="font-size:8.9px;color:#a09fa8;-webkit-text-stroke:0.1px #a09fa8">(13.14%)</span></div>
<div class="t" style="left:180px;width:33.8px;text-align:right;top:742.09px;font-size:9.4px;line-height:9.4px;color:#8f8f98">6</div>
<div class="t" style="left:225.60px;top:741.98px;font-size:10.1px;line-height:10.1px;font-weight:700;color:#1c1c24;-webkit-text-stroke:0.12px #1c1c24;letter-spacing:0.29px;">FREE 30-Day Whole Food Meal Plan</div>
<div class="t" style="left:434.50px;top:740.99px;font-size:10.5px;line-height:10.5px;color:#2a2a33;-webkit-text-stroke:0.2px #2a2a33;">Facebook</div>
<div class="t" style="left:564.60px;top:740.99px;font-size:10.5px;line-height:10.5px;color:#2a2a33;-webkit-text-stroke:0.2px #2a2a33;">Social Media</div>
<div class="t" style="left:643.90px;top:741.00px;font-size:10.72px;line-height:10.72px;color:#2a2a33;-webkit-text-stroke:0.2px #2a2a33;letter-spacing:-0.02px;">Bonus offer</div>
<div class="t" style="left:842.80px;top:741.99px;font-size:10.2px;line-height:10.2px;color:#1f1f28;-webkit-text-stroke:0.2px #1f1f28;">56 <span style="font-size:8.9px;color:#a09fa8;-webkit-text-stroke:0.1px #a09fa8">(7.27%)</span></div>
<div class="t" style="left:918.20px;top:741.99px;font-size:10.2px;line-height:10.2px;color:#1f1f28;-webkit-text-stroke:0.2px #1f1f28;">76 <span style="font-size:8.9px;color:#a09fa8;-webkit-text-stroke:0.1px #a09fa8">(4.27%)</span></div>
<div class="r" style="left:944.3px;top:705.4px;width:41.5px;height:41.5px;background:#5426a8;border:1.2px solid #43198f;box-sizing:border-box;border-radius:50%;box-shadow:0 0 0 1px rgba(255,255,255,0.8),0 2px 4px rgba(0,0,0,0.12)"></div>
<svg class="r" style="left:958px;top:719px;" width="14" height="16" viewBox="0 0 14 16"><path d="M7,14.8 V2.8 M2.8,7 L7,2.8 L11.2,7" fill="none" stroke="#fff" stroke-width="1.6"/></svg>
</body></html>
